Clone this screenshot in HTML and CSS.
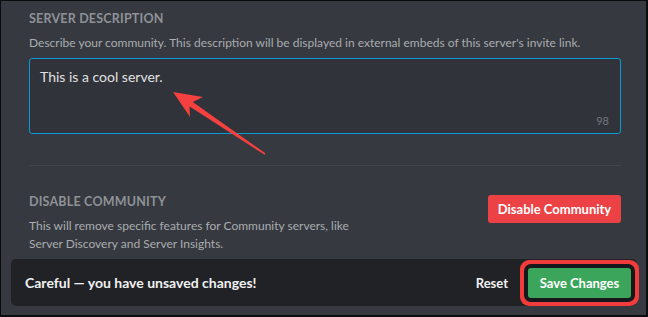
FILE: index.html
```html
<!DOCTYPE html>
<html>
<head>
<meta charset="utf-8">
<link rel="stylesheet" href="styles.css">
</head>
<body>
<div class="page">
  <div class="content">
    <section class="section">
      <h2 class="heading">Server Description</h2>
      <p class="hint">Describe your community. This description will be displayed in external embeds of this server's invite link.</p>
      <div class="textarea">
        <div class="textarea-text">This is a cool server.</div>
        <div class="counter">98</div>
      </div>
    </section>
    <div class="divider"></div>
    <section class="section community">
      <div class="community-info">
        <h2 class="heading">Disable Community</h2>
        <p class="hint two-line">This will remove specific features for Community servers, like<br>Server Discovery and Server Insights.</p>
      </div>
      <button class="btn btn-danger">Disable Community</button>
    </section>
  </div>
  <div class="notice">
    <span class="notice-text">Careful — you have unsaved changes!</span>
    <div class="notice-actions">
      <button class="btn-link">Reset</button>
      <button class="btn btn-save">Save Changes</button>
    </div>
  </div>
  <svg class="arrow" width="648" height="317" viewBox="0 0 648 317">
    <polygon points="173,92 203,97 192.8,102 265.4,153.3 264.6,154.7 189.6,106.6 190,117" fill="#f4403f"/>
  </svg>
</div>
</body>
</html>
```

FILE: styles.css
```css
* { box-sizing: border-box; }
html, body { margin: 0; padding: 0; background: #000; }
body { font-family: Lato, "Open Sans", sans-serif; }

.page {
  position: relative;
  width: 648px;
  height: 317px;
  background: #36393f;
  border-top: 1px solid #0b0c0d;
  border-left: 1px solid #0b0c0d;
  border-right: 2px solid #0b0c0d;
  border-bottom: 2px solid #0b0c0d;
  overflow: hidden;
}

.content {
  padding: 10px 25px 0 28px;
}

.heading {
  margin: 0;
  font-size: 12.5px;
  line-height: 16px;
  font-weight: 700;
  text-transform: uppercase;
  letter-spacing: 0.2px;
  color: #8e9297;
}

.hint {
  margin: 7px 0 0;
  font-size: 12px;
  line-height: 18px;
  color: #a9acb0;
}

.textarea {
  position: relative;
  margin-top: 6px;
  height: 76px;
  background: #303339;
  border: 1px solid #0a9bd6;
  border-radius: 3px;
  padding: 9px 10px;
}

.textarea-text {
  font-size: 14px;
  line-height: 18px;
  color: #e0e1e2;
}

.counter {
  position: absolute;
  right: 11px;
  bottom: 6px;
  font-size: 11px;
  line-height: 13px;
  color: #72767d;
}

.divider {
  height: 1px;
  background: #42454b;
  margin-top: 31px;
}

.community {
  display: flex;
  justify-content: space-between;
  align-items: flex-start;
  margin-top: 28px;
}

.community .hint { margin-top: 7px; }

.btn {
  border: none;
  border-radius: 3px;
  font-family: Lato, "Open Sans", sans-serif;
  font-size: 13px;
  font-weight: 700;
  color: #fff;
  cursor: pointer;
}

.btn-danger {
  width: 133px;
  height: 28px;
  background: #ed4245;
  margin-top: 1px;
}

.notice {
  margin: 6px 9px 0 10px;
  height: 47px;
  background: #202225;
  border-radius: 5px;
  display: flex;
  align-items: center;
  justify-content: space-between;
  padding: 0 6px 0 14px;
}

.notice-text {
  font-size: 14px;
  font-weight: 700;
  color: #f0f1f2;
}

.notice-actions {
  display: flex;
  align-items: center;
  gap: 20px;
}

.btn-link {
  background: none;
  border: none;
  padding: 0;
  font-family: Lato, "Open Sans", sans-serif;
  font-size: 13px;
  font-weight: 700;
  color: #f0f1f2;
}

.btn-save {
  width: 103px;
  height: 30px;
  background: #3ba55c;
  box-shadow: 0 0 0 4px #17181b, 0 0 0 8px #f23c3c;
  border-radius: 3px;
}

.arrow {
  position: absolute;
  left: -1px;
  top: -1px;
  pointer-events: none;
}
```
